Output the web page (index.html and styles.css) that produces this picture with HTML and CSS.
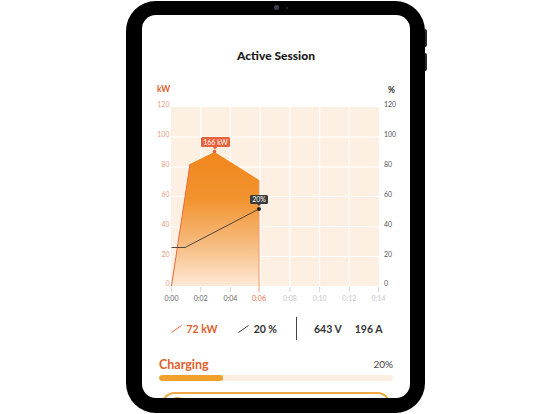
FILE: index.html
```html
<!DOCTYPE html>
<html>
<head>
<meta charset="utf-8">
<link rel="stylesheet" href="styles.css">
</head>
<body>
<div class="stage">
  <div class="device">
    <span class="camera"></span>
    <span class="sensor"></span>
    <span class="btn btn-a"></span>
    <span class="btn btn-b"></span>
    <div class="screen">
      <h1 class="title">Active Session</h1>
      <svg class="chart" width="268" height="225" viewBox="142 80 268 225" xmlns="http://www.w3.org/2000/svg">
        <defs>
          <linearGradient id="kwfill" x1="0" y1="152" x2="0" y2="286" gradientUnits="userSpaceOnUse">
            <stop offset="0" stop-color="#f0861c"/>
            <stop offset="0.35" stop-color="#f2932e"/>
            <stop offset="0.7" stop-color="#f7bd82"/>
            <stop offset="1" stop-color="#fde9d6"/>
          </linearGradient>
        </defs>
        <text x="157" y="92" class="ax-unit kw">kW</text>
        <text x="388" y="93" class="ax-unit pct">%</text>
        <g class="ylab-l">
          <text x="169.5" y="107">120</text>
          <text x="169.5" y="137">100</text>
          <text x="169.5" y="167">80</text>
          <text x="169.5" y="197">60</text>
          <text x="169.5" y="227">40</text>
          <text x="169.5" y="256.5">20</text>
          <text x="169.5" y="286">0</text>
        </g>
        <g class="ylab-r">
          <text x="384" y="107">120</text>
          <text x="384" y="137">100</text>
          <text x="384" y="167">80</text>
          <text x="384" y="197">60</text>
          <text x="384" y="227">40</text>
          <text x="384" y="256.5">20</text>
          <text x="384" y="286">0</text>
        </g>
        <rect x="171" y="107" width="208" height="179" fill="#fdf0e3"/>
        <g class="grid">
          <line x1="200.7" y1="107" x2="200.7" y2="286"/>
          <line x1="230.4" y1="107" x2="230.4" y2="286"/>
          <line x1="260.1" y1="107" x2="260.1" y2="286"/>
          <line x1="289.9" y1="107" x2="289.9" y2="286"/>
          <line x1="319.6" y1="107" x2="319.6" y2="286"/>
          <line x1="349.3" y1="107" x2="349.3" y2="286"/>
          <line x1="171" y1="137" x2="379" y2="137"/>
          <line x1="171" y1="167" x2="379" y2="167"/>
          <line x1="171" y1="196.5" x2="379" y2="196.5"/>
          <line x1="171" y1="226.5" x2="379" y2="226.5"/>
          <line x1="171" y1="256.5" x2="379" y2="256.5"/>
        </g>
        <g class="ticks">
          <line x1="171.5" y1="287" x2="171.5" y2="292"/>
          <line x1="200.7" y1="287" x2="200.7" y2="292"/>
          <line x1="230.4" y1="287" x2="230.4" y2="292"/>
          <line x1="289.9" y1="287" x2="289.9" y2="292"/>
          <line x1="319.6" y1="287" x2="319.6" y2="292"/>
          <line x1="349.3" y1="287" x2="349.3" y2="292"/>
          <line x1="378.5" y1="287" x2="378.5" y2="292"/>
        </g>
        <polygon points="171.5,286 190,164 214.5,152 259,180 259,286" fill="url(#kwfill)"/>
        <line x1="171.5" y1="286" x2="190" y2="164" class="kw-edge"/>
        <line x1="259" y1="180" x2="259" y2="292" class="cursor"/>
        <polyline points="171.5,247.5 185,247.5 259,209" class="pct-line"/>
        <g class="xlab">
          <text x="171.5" y="301" class="past">0:00</text>
          <text x="200.7" y="301" class="past">0:02</text>
          <text x="230.4" y="301" class="past">0:04</text>
          <text x="259" y="301" class="now">0:06</text>
          <text x="289.9" y="301" class="future">0:08</text>
          <text x="319.6" y="301" class="future">0:10</text>
          <text x="349.3" y="301" class="future">0:12</text>
          <text x="378.5" y="301" class="future">0:14</text>
        </g>
        <rect x="201" y="137" width="29" height="10" rx="1.5" fill="#e8633a"/>
        <polygon points="212.5,146.5 217.5,146.5 215,149.5" fill="#e8633a"/>
        <text x="215.5" y="144.8" class="tip">166 kW</text>
        <circle cx="214.5" cy="151.5" r="1.8" fill="#e8633a"/>
        <rect x="250" y="195" width="18" height="9" rx="1.5" fill="#3b3b3b"/>
        <polygon points="256.5,203.5 261.5,203.5 259,206" fill="#3b3b3b"/>
        <text x="259" y="202.2" class="tip">20%</text>
        <circle cx="259" cy="209" r="2" fill="#222"/>
      </svg>
      <div class="legend">
        <div class="leg-item kwv">
          <svg width="11" height="8" viewBox="0 0 11 8"><line x1="0.5" y1="7.5" x2="10.5" y2="0.5" stroke="#e8643a" stroke-width="1"/></svg>
          <span>72 kW</span>
        </div>
        <div class="leg-item pctv">
          <svg width="11" height="8" viewBox="0 0 11 8"><line x1="0.5" y1="7.5" x2="10.5" y2="0.5" stroke="#333" stroke-width="1"/></svg>
          <span>20 %</span>
        </div>
        <div class="divider"></div>
        <span class="val">643 V</span>
        <span class="val">196 A</span>
      </div>
      <div class="panel">
        <div class="status">
          <span class="status-label">Charging</span>
          <span class="status-pct">20%</span>
        </div>
        <div class="bar"><div class="bar-fill" style="width:27.5%"></div></div>
        <div class="card"><span class="card-dot"></span></div>
      </div>
    </div>
  </div>
</div>
</body>
</html>
```

FILE: styles.css
```css
* { box-sizing: border-box; }
html, body {
  margin: 0;
  padding: 0;
  background: #ffffff;
}
body {
  width: 552px;
  height: 414px;
  overflow: hidden;
  font-family: Lato, "Noto Sans", "Liberation Sans", sans-serif;
}
.stage {
  padding: 1px 0 0 126px;
}
.device {
  position: relative;
  width: 299px;
  height: 412px;
  background: #000;
  border-radius: 30px;
  padding: 14px 15px 15px 16px;
}
.camera {
  position: absolute;
  left: 148px;
  top: 4px;
  width: 5px;
  height: 5px;
  border-radius: 50%;
  background: #3d3f52;
}
.sensor {
  position: absolute;
  left: 160px;
  top: 6px;
  width: 2px;
  height: 2px;
  border-radius: 50%;
  background: #2a2a2e;
}
.btn {
  position: absolute;
  right: -2px;
  width: 2px;
  border-radius: 0 2px 2px 0;
  background: #2a2a2a;
}
.btn-a { top: 28px; height: 18px; }
.btn-b { top: 52px; height: 18px; }
.screen {
  width: 268px;
  height: 383px;
  background: #fff;
  border-radius: 14px;
  overflow: hidden;
  display: flex;
  flex-direction: column;
}
.title {
  margin: 32px 0 0 0;
  height: 17px;
  line-height: 17px;
  font-size: 12px;
  font-weight: 900;
  color: #1a1a1a;
  text-align: center;
}
.chart {
  display: block;
  margin-top: 16px;
  flex: none;
}
.ax-unit { font-size: 8.5px; font-weight: 700; }
.kw { fill: #e0602c; }
.pct { fill: #333; }
.ylab-l text { font-size: 7px; fill: #eb9c84; text-anchor: end; }
.ylab-r text { font-size: 7px; fill: #555; text-anchor: start; }
.grid line { stroke: #ffffff; stroke-width: 1.2; }
.ticks line { stroke: #c9c9c9; stroke-width: 0.8; }
.kw-edge { stroke: #e86a38; stroke-width: 1; }
.cursor { stroke: #f09a6e; stroke-width: 1; }
.pct-line { fill: none; stroke: #3a3a3a; stroke-width: 0.9; }
.xlab text { font-size: 7px; text-anchor: middle; }
.xlab .past { fill: #666; }
.xlab .now { fill: #e8704e; }
.xlab .future { fill: #c6c6c6; }
.tip { font-size: 7px; fill: #fff; text-anchor: middle; }
.legend {
  margin-top: 12px;
  height: 24px;
  display: flex;
  align-items: center;
  justify-content: center;
  padding-left: 1px;
  font-size: 10.5px;
  font-weight: 700;
  color: #333;
}
.leg-item {
  display: flex;
  align-items: center;
  gap: 5px;
}
.leg-item svg { display: block; }
.kwv { color: #e0602c; margin-right: 20px; }
.pctv { margin-right: 19px; }
.divider {
  width: 1px;
  height: 23px;
  background: #444;
  margin-right: 17px;
}
.val + .val { margin-left: 13px; }
.panel {
  padding: 0 17px;
  margin-top: 16px;
}
.status {
  display: flex;
  justify-content: space-between;
  align-items: center;
  height: 16px;
}
.status-label {
  font-size: 12.5px;
  font-weight: 700;
  color: #e0602c;
}
.status-pct {
  font-size: 10px;
  color: #444;
}
.bar {
  margin-top: 3px;
  height: 6px;
  border-radius: 3px;
  background: #fcefe2;
  overflow: hidden;
}
.bar-fill {
  height: 100%;
  border-radius: 3px;
  background: #f2a12c;
}
.card {
  margin: 11px 3px 0 3px;
  height: 40px;
  border: 2px solid #f0a846;
  border-radius: 12px;
  padding: 3px 5px;
}
.card-dot {
  display: block;
  width: 17px;
  height: 17px;
  border-radius: 50%;
  border: 2px solid #f0a846;
}
```
